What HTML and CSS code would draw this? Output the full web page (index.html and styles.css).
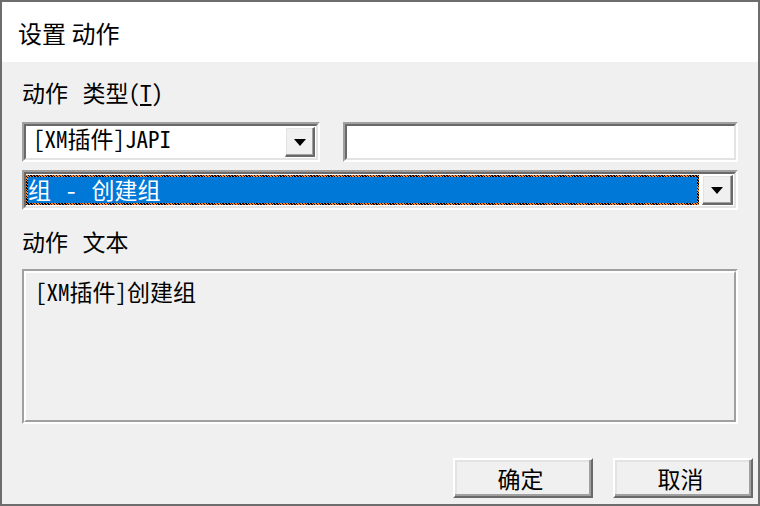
FILE: index.html
```html
<!DOCTYPE html>
<html lang="zh-CN">
<head>
<meta charset="utf-8">
<title>设置 动作</title>
<link rel="stylesheet" href="styles.css">
</head>
<body>
<div class="window">
  <div class="titlebar">设置 动作</div>
  <div class="content">
    <div class="label">动作 类型(<span class="u">T</span>)</div>
    <div class="row">
      <div class="sunken combo1">
        <div class="field">
          <span class="value">[XM插件]JAPI</span>
          <div class="ddbtn"><span class="arrow"></span></div>
        </div>
      </div>
      <div class="sunken textbox"><div class="field"></div></div>
    </div>
    <div class="sunken combo2">
      <div class="field">
        <div class="selected">组 - 创建组</div>
        <div class="ddbtn wide"><span class="arrow"></span></div>
      </div>
    </div>
    <div class="label label2">动作 文本</div>
    <div class="memo"><div class="memo-inner">[XM插件]创建组</div></div>
    <div class="buttons">
      <button class="btn">确定</button>
      <button class="btn">取消</button>
    </div>
  </div>
</div>
</body>
</html>
```
FILE: styles.css
```css
html, body {
  margin: 0;
  padding: 0;
}
body {
  width: 760px;
  height: 506px;
  overflow: hidden;
  background: #f0f0f0;
  font-family: "Noto Sans Mono CJK SC", "Noto Sans CJK SC", sans-serif;
  font-size: 23px;
  color: #000;
}
.window {
  box-sizing: border-box;
  width: 760px;
  height: 506px;
  border: 2px solid #6d6d6d;
  background: #f0f0f0;
  display: flex;
  flex-direction: column;
}
.titlebar {
  height: 60px;
  flex: none;
  background: #fff;
  display: flex;
  align-items: center;
  padding-left: 16px;
  font-family: "Noto Sans CJK SC", sans-serif;
  font-size: 24px;
}
.content {
  padding: 18px 20px 6px;
  display: flex;
  flex-direction: column;
}
.label {
  height: 24px;
  line-height: 24px;
  word-spacing: 3px;
  white-space: pre;
}
.u {
  text-decoration: underline;
}
.row {
  display: flex;
  margin-top: 18px;
  gap: 23px;
}
.sunken {
  box-sizing: border-box;
  height: 40px;
  border: 2px solid;
  border-color: #a0a0a0 #fff #fff #a0a0a0;
}
.combo1 {
  width: 298px;
  flex: none;
}
.textbox {
  flex: 1;
}
.field {
  box-sizing: border-box;
  height: 100%;
  border: 2px solid;
  border-color: #696969 #e3e3e3 #e3e3e3 #696969;
  background: #fff;
  display: flex;
  align-items: center;
}
.value {
  flex: 1;
  align-self: flex-start;
  padding-left: 7px;
  padding-top: 1px;
  line-height: 22px;
  white-space: pre;
}
.ddbtn {
  box-sizing: border-box;
  flex: none;
  width: 30px;
  height: 30px;
  margin: 0 1px;
  background: #f0f0f0;
  border-style: solid;
  border-width: 1px 2px 2px 1px;
  border-color: #fff #696969 #696969 #fff;
  box-shadow: inset -1px -1px #a0a0a0, inset 1px 1px #e3e3e3;
  display: flex;
  align-items: center;
  justify-content: center;
}
.ddbtn.wide {
  width: 31px;
  margin: 0 1px 0 3px;
}
.arrow {
  width: 0;
  height: 0;
  border-left: 6px solid transparent;
  border-right: 6px solid transparent;
  border-top: 7px solid #000;
  margin-top: 1px;
}
.combo2 {
  margin-top: 8px;
}
.selected {
  box-sizing: border-box;
  flex: 1;
  height: 30px;
  background: #0078d7;
  color: #fff;
  border: 2px solid transparent;
  border-image: repeating-linear-gradient(45deg, #000 0 1px, #ff8728 1px 2px) 2;
  line-height: 25px;
  word-spacing: 3px;
  white-space: pre;
}
.label2 {
  margin-top: 19px;
}
.memo {
  box-sizing: border-box;
  margin-top: 16px;
  height: 155px;
  border: 2px solid;
  border-color: #a0a0a0 #fff #fff #a0a0a0;
}
.memo-inner {
  box-sizing: border-box;
  height: 100%;
  border: 2px solid;
  border-color: #fff #a0a0a0 #a0a0a0 #fff;
  padding: 6px 0 0 9px;
  line-height: 24px;
}
.buttons {
  margin-top: 34px;
  margin-right: -15px;
  display: flex;
  justify-content: flex-end;
  gap: 20px;
}
.btn {
  box-sizing: border-box;
  width: 140px;
  height: 40px;
  padding: 0 5px 0 0;
  background: #f0f0f0;
  border-style: solid;
  border-width: 2px;
  border-color: #fff #696969 #696969 #fff;
  box-shadow: inset -2px -2px #a0a0a0, inset 2px 2px #e3e3e3;
  font-family: "Noto Sans Mono CJK SC", "Noto Sans CJK SC", sans-serif;
  font-size: 23px;
  color: #000;
  line-height: 33px;
}
```
